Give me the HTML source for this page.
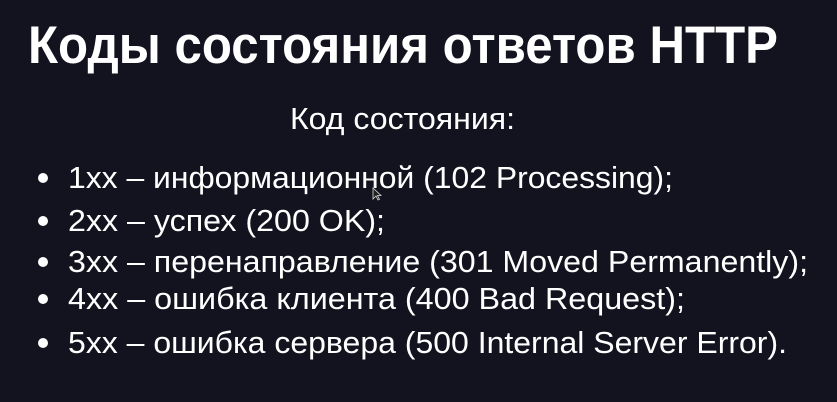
<!DOCTYPE html>
<html><head><meta charset="utf-8"><style>
html,body{margin:0;padding:0;width:837px;height:402px;overflow:hidden;background:#13131f;}
svg{display:block}
text{fill:#fff;font-family:"Liberation Sans",sans-serif;}
</style></head><body>
<svg width="837" height="402" viewBox="0 0 837 402" xmlns="http://www.w3.org/2000/svg">
<rect width="837" height="402" fill="#13131f"/>
<text x="28" y="63" font-size="53" font-weight="bold" textLength="750" lengthAdjust="spacingAndGlyphs">Коды состояния ответов HTTP</text>
<text x="290" y="129" font-size="31" textLength="225" lengthAdjust="spacingAndGlyphs">Код состояния:</text>
<g font-size="31">
<text x="68" y="188" textLength="605" lengthAdjust="spacingAndGlyphs">1xx – информационной (102 Processing);</text>
<text x="68" y="231" textLength="317" lengthAdjust="spacingAndGlyphs">2xx – успех (200 OK);</text>
<text x="68" y="272" textLength="740" lengthAdjust="spacingAndGlyphs">3xx – перенаправление (301 Moved Permanently);</text>
<text x="68" y="309" textLength="617" lengthAdjust="spacingAndGlyphs">4xx – ошибка клиента (400 Bad Request);</text>
<text x="68" y="353" textLength="719" lengthAdjust="spacingAndGlyphs">5xx – ошибка сервера (500 Internal Server Error).</text>
</g>
<g fill="#fff">
<circle cx="43" cy="178" r="5"/>
<circle cx="43" cy="221" r="5"/>
<circle cx="43" cy="262" r="5"/>
<circle cx="43" cy="299" r="5"/>
<circle cx="43" cy="343" r="5"/>
</g>
<path d="M373 188 L373 199 L376 196 L378 200 L379.5 199.3 L377.5 195.5 L381 195.5 Z" fill="#222" stroke="#ddd" stroke-width="0.8"/>
</svg>
</body></html>
